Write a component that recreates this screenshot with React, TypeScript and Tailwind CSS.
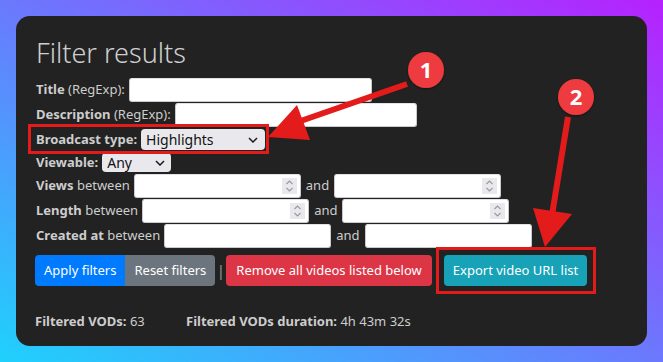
import React from "react";

const font = { fontFamily: '"Noto Sans", "Open Sans", sans-serif' };

function Spinner() {
  return (
    <div className="absolute right-[3px] top-[3px] bottom-[3px] w-[15px] bg-[#e9e9ed] flex flex-col items-center justify-center">
      <svg width="9" height="14" viewBox="0 0 9 14" fill="none" stroke="#9a9aa4" strokeWidth="1.2">
        <path d="M1.5 5 L4.5 2 L7.5 5" />
        <path d="M1.5 9 L4.5 12 L7.5 9" />
      </svg>
    </div>
  );
}

function TextInput({ w, spin }: { w: string; spin?: boolean }) {
  return (
    <div className={`relative h-[24px] bg-white rounded-[3px] border border-[#c9c9cf] border-t-[#e3e3e6] ${w}`}>
      {spin && <Spinner />}
    </div>
  );
}

function Chevron() {
  return (
    <svg width="10" height="6" viewBox="0 0 10 6" fill="none" stroke="#1b1b1b" strokeWidth="1.5">
      <path d="M1 1 L5 5 L9 1" />
    </svg>
  );
}

export default function App() {
  return (
    <div
      className="relative w-[663px] h-[362px] p-[16px] bg-[linear-gradient(to_top_right,#1fd1fc,#b621fe)] overflow-hidden"
      style={font}
    >
      <div className="w-[631px] h-[330px] rounded-[14px] bg-[#222222] pt-[20px] pl-[20px] text-[#cdcdcd] text-[13px]">
        <div className="h-[34px] leading-[34px] text-[27px] font-light text-[#cfcfcf] mb-[7px]">Filter results</div>

        <div className="h-[25px] flex items-center gap-[4px]">
          <span><b>Title</b> (RegExp):</span>
          <TextInput w="w-[243px]" />
        </div>
        <div className="h-[25px] flex items-center gap-[4px]">
          <span><b>Description</b> (RegExp):</span>
          <TextInput w="w-[242px]" />
        </div>
        <div className="h-[25px] flex items-center gap-[4px]">
          <b>Broadcast type:</b>
          <div className="h-[21px] w-[124px] rounded-[4px] bg-[#e9e9ed] text-[#111] flex items-center justify-between pl-[5px] pr-[7px] text-[14px]">
            <span>Highlights</span>
            <Chevron />
          </div>
        </div>
        <div className="h-[21px] flex items-center gap-[4px]">
          <b>Viewable:</b>
          <div className="h-[19px] w-[69px] rounded-[4px] bg-[#e9e9ed] text-[#111] flex items-center justify-between pl-[5px] pr-[6px] text-[14px]">
            <span>Any</span>
            <Chevron />
          </div>
        </div>
        <div className="h-[25px] flex items-center gap-[4px]">
          <span><b>Views</b> between</span>
          <TextInput w="w-[167px]" spin />
          <span className="px-[1px]">and</span>
          <TextInput w="w-[167px]" spin />
        </div>
        <div className="h-[25px] flex items-center gap-[4px]">
          <span><b>Length</b> between</span>
          <TextInput w="w-[167px]" spin />
          <span className="px-[1px]">and</span>
          <TextInput w="w-[167px]" spin />
        </div>
        <div className="h-[25px] flex items-center gap-[4px]">
          <span><b>Created at</b> between</span>
          <TextInput w="w-[167px]" />
          <span className="px-[1px]">and</span>
          <TextInput w="w-[167px]" />
        </div>

        <div className="mt-[7px] flex items-center text-white text-[13px] -ml-px">
          <div className="h-[31px] px-[9px] flex items-center bg-[#007bff] rounded-l-[4px]">Apply filters</div>
          <div className="h-[31px] px-[9px] flex items-center bg-[#6c757d] rounded-r-[4px]">Reset filters</div>
          <div className="w-[11px] flex justify-center text-[#9a9a9a] text-[15px]">|</div>
          <div className="h-[31px] px-[10px] flex items-center bg-[#dc3545] rounded-[4px]">Remove all videos listed below</div>
          <div className="h-[31px] px-[9px] ml-[12px] flex items-center bg-[#17a2b8] rounded-[4px]">Export video URL list</div>
        </div>

        <div className="mt-[26px] flex items-center -ml-px">
          <span className="w-[151px]"><b>Filtered VODs:</b> 63</span>
          <span><b>Filtered VODs duration:</b> 4h 43m 32s</span>
        </div>
      </div>

      {/* annotations */}
      <div className="absolute left-[28px] top-[124px] w-[241px] h-[30px] border-[3px] border-[#e41b1b] pointer-events-none" />
      <div className="absolute left-[436px] top-[247px] w-[160px] h-[47px] border-[3px] border-[#e41b1b] pointer-events-none" />
      <svg className="absolute left-0 top-0 pointer-events-none" width="663" height="362" viewBox="0 0 663 362">
        <defs>
          <filter id="sh" x="-50%" y="-50%" width="200%" height="200%">
            <feDropShadow dx="0" dy="1" stdDeviation="1.2" floodColor="#000" floodOpacity="0.5" />
          </filter>
        </defs>
        <line x1="407" y1="84" x2="292" y2="124" stroke="#e41b1b" strokeWidth="6" />
        <polygon points="268,137 297,105 310,140" fill="#e41b1b" />
        <line x1="568" y1="117" x2="552" y2="215" stroke="#e41b1b" strokeWidth="6" />
        <polygon points="545,247 533,208 572,214" fill="#e41b1b" />
        <circle cx="426" cy="70" r="18" fill="#ee3b3f" filter="url(#sh)" />
        <text x="426" y="78" textAnchor="middle" fill="#fff" fontSize="22" fontWeight="700" style={font}>1</text>
        <circle cx="576" cy="97" r="18" fill="#ee3b3f" filter="url(#sh)" />
        <text x="576" y="105" textAnchor="middle" fill="#fff" fontSize="22" fontWeight="700" style={font}>2</text>
      </svg>
    </div>
  );
}
